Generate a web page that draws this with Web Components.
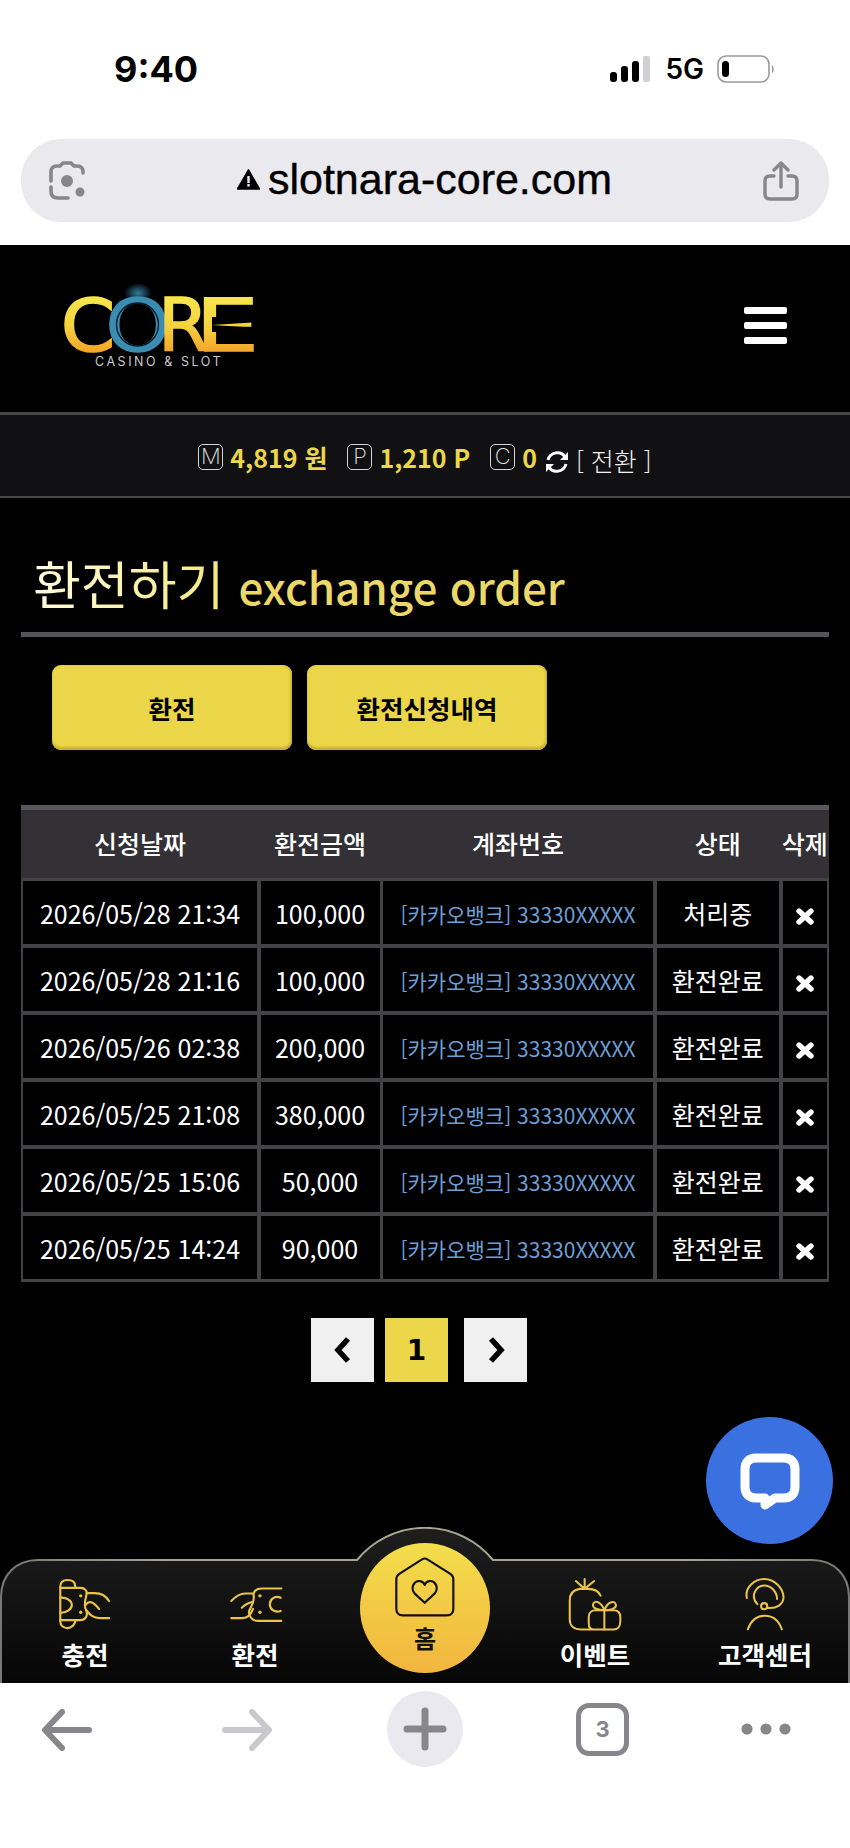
<!DOCTYPE html>
<html lang="ko">
<head>
<meta charset="utf-8">
<title>slotnara-core.com</title>
<style>
  html, body { margin: 0; padding: 0; background: #000; }
  body {
    position: relative;
    width: 850px;
    height: 1848px;
    overflow: hidden;
    display: flex;
    flex-direction: column;
    font-family: "Noto Sans CJK KR", "Noto Sans", sans-serif;
  }
  page-main { flex: 1 0 0; }
</style>
</head>
<body>
  <phone-chrome></phone-chrome>
  <site-header></site-header>
  <balance-bar></balance-bar>
  <page-main>
    <page-title></page-title>
    <tab-row>
      <tab-button>환전</tab-button>
      <tab-button>환전신청내역</tab-button>
    </tab-row>
    <order-table>
      <order-row date="2026/05/28 21:34" amount="100,000" status="처리중"></order-row>
      <order-row date="2026/05/28 21:16" amount="100,000" status="환전완료"></order-row>
      <order-row date="2026/05/26 02:38" amount="200,000" status="환전완료"></order-row>
      <order-row date="2026/05/25 21:08" amount="380,000" status="환전완료"></order-row>
      <order-row date="2026/05/25 15:06" amount="50,000" status="환전완료"></order-row>
      <order-row date="2026/05/25 14:24" amount="90,000" status="환전완료"></order-row>
    </order-table>
    <page-nav></page-nav>
  </page-main>
  <bottom-nav></bottom-nav>
  <browser-toolbar></browser-toolbar>
  <chat-fab></chat-fab>

<script>
/* small helper: every element below is just a static shadow root */
function define(tag, html) {
  class El extends HTMLElement {
    constructor() {
      super();
      this.attachShadow({ mode: 'open' });
    }
    connectedCallback() {
      this.shadowRoot.innerHTML = typeof html === 'function' ? html(this) : html;
    }
  }
  customElements.define(tag, El);
}

const KR = '"Noto Sans CJK KR", "Noto Sans", sans-serif';

/* iOS status bar + Safari-ish address bar */
define('phone-chrome', `
<style>
  :host { display: block; height: 245px; background: #fff; font-family: Inter, "Liberation Sans", sans-serif; color: #000; }
  .status { height: 139px; display: flex; align-items: flex-start; padding: 0 75px 0 114px; box-sizing: border-box; }
  .time { font-size: 36px; font-weight: 700; line-height: 44px; margin-top: 47px; }
  .right { margin-left: auto; display: flex; align-items: center; margin-top: 54px; height: 30px; }
  .g5 { font-size: 28px; font-weight: 600; margin: 0 13px 0 14px; line-height: 30px; }
  .url { margin: 0 21px; height: 83px; border-radius: 40px; background: #e9e9ee; display: flex; align-items: center; padding: 0 30px 0 27px; }
  .addr { flex: 1; display: flex; justify-content: center; align-items: center; gap: 8px; font-family: "Liberation Sans", sans-serif; font-size: 43px; line-height: 50px; padding-bottom: 3px; -webkit-text-stroke: .4px #000; }
  svg { display: block; flex: none; }
</style>
<div class="status">
  <div class="time">9:40</div>
  <div class="right">
    <svg width="41" height="26" viewBox="0 0 41 26">
      <rect x="0" y="16" width="7" height="10" rx="3" fill="#000"/>
      <rect x="11" y="10" width="7" height="16" rx="3" fill="#000"/>
      <rect x="22" y="5" width="7" height="21" rx="3" fill="#000"/>
      <rect x="33" y="0" width="7" height="26" rx="2" fill="#d0d0d2"/>
    </svg>
    <div class="g5">5G</div>
    <svg width="58" height="28" viewBox="0 0 58 28">
      <rect x="1" y="1" width="51" height="26" rx="8" fill="none" stroke="#9a9a9c" stroke-width="1.6"/>
      <rect x="5" y="6" width="7" height="16" rx="3.5" fill="#000"/>
      <path d="M55 10 C57 11 57.5 17 55 18 Z" fill="#9a9a9c"/>
    </svg>
  </div>
</div>
<div class="url">
  <svg width="38" height="40" viewBox="0 0 38 40" fill="none" stroke="#87878b" stroke-width="3.6" stroke-linecap="round">
    <path d="M3 20 V11 C3 7 5 5 9 5 H12 L15 2 H23 L26 5 H29 C33 5 35 7 35 11 V12"/>
    <path d="M3 26 V30 C3 35 6 37 10 37 H20"/>
    <circle cx="19" cy="20" r="6" fill="#87878b" stroke="none"/>
    <circle cx="32" cy="31" r="4.5" fill="#87878b" stroke="none"/>
  </svg>
  <div class="addr">
    <svg width="23" height="21" viewBox="0 0 23 21"><path d="M11.5 1 L22.5 20 H.5 Z" fill="#000" stroke="#000" stroke-width="1.5" stroke-linejoin="round"/><rect x="10.3" y="7" width="2.4" height="7" fill="#e9e9ee"/><rect x="10.3" y="15" width="2.4" height="2.6" fill="#e9e9ee"/></svg>
    <span>slotnara-core.com</span>
  </div>
  <svg width="36" height="40" viewBox="0 0 36 40" fill="none" stroke="#87878b" stroke-width="3.4" stroke-linecap="round" stroke-linejoin="round">
    <path d="M11 15 H7 C3 15 2 17 2 20 V33 C2 37 4 38 7 38 H29 C32 38 34 37 34 33 V20 C34 17 33 15 29 15 H25"/>
    <path d="M18 26 V3 M11 9 L18 2 L25 9"/>
  </svg>
</div>`);

/* logo letters are real text, each one stretched to the logo's wide proportions */
define('site-header', `
<style>
  :host { display: block; height: 167px; background: #000; }
  .wrap { display: flex; align-items: flex-start; padding: 20px 63px 0 60px; }
  .burger { margin-left: auto; margin-top: 42px; display: flex; flex-direction: column; gap: 8px; }
  .burger i { display: block; width: 43px; height: 7px; border-radius: 2px; background: #fff; }
  svg { display: block; overflow: visible; }
  text.big { font-family: "DejaVu Sans", sans-serif; font-size: 73px; stroke-width: 1.6; }
</style>
<div class="wrap">
  <svg width="200" height="110" viewBox="0 -20 200 110">
    <defs>
      <linearGradient id="gold2" gradientUnits="userSpaceOnUse" x1="0" y1="-55" x2="0" y2="0">
        <stop offset="0" stop-color="#f7e64d"/><stop offset=".55" stop-color="#f5d23f"/><stop offset="1" stop-color="#f4a62a"/>
      </linearGradient>
      <radialGradient id="flare"><stop offset="0" stop-color="#3f9cc4" stop-opacity=".8"/><stop offset="1" stop-color="#3f9cc4" stop-opacity="0"/></radialGradient>
    </defs>
    <ellipse cx="78" cy="8" rx="14" ry="10" fill="url(#flare)"/>
    <text class="big" transform="translate(.7 66) scale(1.07 1)" fill="url(#gold2)" stroke="url(#gold2)">C</text>
    <text class="big" transform="translate(45.5 66) scale(1.12 1)" fill="#3b8cb2" stroke="#3b8cb2">O</text>
    <text class="big" transform="translate(98 66) scale(1 1)" fill="url(#gold2)" stroke="url(#gold2)">R</text>
    <text class="big" transform="translate(135 66) scale(1.39 1)" fill="url(#gold2)" stroke="url(#gold2)">E</text>
    <polygon points="152,32 192,32 192,37.5 152,40" fill="#000"/>
    <polygon points="152,40 192,42.5 192,47 152,47" fill="#000"/>
    <ellipse cx="77.5" cy="39.5" rx="21" ry="21.5" fill="none" stroke="#04161f" stroke-width="1.3"/>
    <text x="35" y="81" font-family="Inter, sans-serif" font-size="12.5" letter-spacing="2.55" fill="#c9c9c9">CASINO &amp; SLOT</text>
  </svg>
  <div class="burger"><i></i><i></i><i></i></div>
</div>`);

define('balance-bar', `
<style>
  :host { display: block; height: 86px; box-sizing: border-box; background: #111113; border-top: 3px solid #48484a; border-bottom: 2px solid #48484a; font-family: ${KR}; }
  .row { height: 100%; display: flex; align-items: center; justify-content: center; padding-top: 2px; box-sizing: border-box; }
  .tag { width: 25px; height: 26px; box-sizing: border-box; border: 1.5px solid #d6d6d6; border-radius: 5px; color: #e0e0e0; font: 200 22px/23px Inter, sans-serif; text-align: center; margin-right: 7px; }
  .v { color: #ecd64a; font-size: 25px; font-weight: 700; line-height: 30px; margin-right: 20px; }
  .v.last { margin-right: 8px; }
  .sw { color: #f2f2f2; font-size: 25px; font-weight: 300; line-height: 30px; margin: 6px 0 0 7px; }
  svg { flex: none; margin-top: 10px; }
</style>
<div class="row">
  <span class="tag">M</span><span class="v">4,819 원</span>
  <span class="tag">P</span><span class="v">1,210 P</span>
  <span class="tag">C</span><span class="v last">0</span>
  <svg width="24" height="24" viewBox="0 0 24 24" fill="none" stroke="#fff" stroke-width="3">
    <path d="M3 10 C5 2 16 0 20 7"/><path d="M21 14 C19 22 8 24 4 17"/>
    <path d="M23 2 V10 H15 Z" fill="#fff" stroke="none"/><path d="M1 22 V14 H9 Z" fill="#fff" stroke="none"/>
  </svg>
  <span class="sw">[ 전환 ]</span>
</div>`);

define('page-title', `
<style>
  :host { display: block; margin: 0 21px; height: 139px; box-sizing: border-box; border-bottom: 5px solid #545458; font-family: ${KR}; white-space: nowrap; padding: 50px 0 0 12px; }
  .ko { font-size: 52px; line-height: 70px; font-weight: 400; background: linear-gradient(90deg, #fffbe0, #f5e87c); -webkit-background-clip: text; background-clip: text; color: transparent; }
  .en { font-size: 44px; line-height: 70px; font-weight: 500; color: #ecd868; margin-left: 14px; }
</style>
<span class="ko">환전하기</span><span class="en">exchange order</span>`);

define('tab-row', `
<style>
  :host { display: flex; gap: 15px; padding: 28px 0 0 52px; height: 168px; box-sizing: border-box; }
</style>
<slot></slot>`);

define('tab-button', `
<style>
  :host {
    display: flex; align-items: center; justify-content: center;
    width: 240px; height: 85px; border-radius: 9px; box-sizing: border-box;
    background: #ebd64a; box-shadow: inset 0 -3px 2px #c9b233, inset -2px 0 2px #d3bc38;
    color: #000; font-family: ${KR}; font-size: 25.5px; font-weight: 700;
  }
</style>
<slot></slot>`);

const COLS = 'grid-template-columns: 234px 119px 270px 122.5px 44.5px; column-gap: 3.5px;';

define('order-table', `
<style>
  :host { display: block; margin: 0 21px; font-family: ${KR}; }
  .head { display: grid; ${COLS} height: 73px; box-sizing: border-box; padding: 0 3px 0 2px; background: #333135; border-top: 5px solid #58585c; color: #fff; font-size: 25px; font-weight: 500; }
  .head div { display: flex; align-items: center; justify-content: center; white-space: nowrap; padding-bottom: 2px; }
  .body { display: flex; flex-direction: column; gap: 4px; padding: 3px 0; background: #434345; }
</style>
<div class="head"><div>신청날짜</div><div>환전금액</div><div>계좌번호</div><div>상태</div><div>삭제</div></div>
<div class="body"><slot></slot></div>`);

define('order-row', el => `
<style>
  :host { display: grid; ${COLS} height: 63px; padding: 0 3px 0 2px; font-family: ${KR}; color: #fff; font-size: 25px; }
  div { background: #000; display: flex; align-items: center; justify-content: center; white-space: nowrap; padding-top: 1px; box-sizing: border-box; }
  .acct { color: #6c9fd6; font-size: 21px; padding-top: 2px; }
  .x { padding: 8px 0 0; }
</style>
<div>${el.getAttribute('date')}</div>
<div>${el.getAttribute('amount')}</div>
<div class="acct">[카카오뱅크] 33330XXXXX</div>
<div>${el.getAttribute('status')}</div>
<div class="x"><svg width="18" height="17" viewBox="0 0 18 17"><path d="M3 3 L15 14 M15 3 L3 14" stroke="#fff" stroke-width="5.4" stroke-linecap="round"/></svg></div>`);

define('page-nav', `
<style>
  :host { display: flex; padding: 36px 0 0 311px; font-family: "DejaVu Sans", sans-serif; }
  div { width: 63px; height: 64px; display: flex; align-items: center; justify-content: center; background: #f0f0f0; color: #000; font-size: 28px; font-weight: 700; }
  .cur { background: #ecd64a; margin: 0 16px 0 11px; }
  svg { display: block; }
</style>
<div><svg width="18" height="28" viewBox="0 0 18 28"><path d="M14 3 L4 14 L14 25" fill="none" stroke="#000" stroke-width="5.5"/></svg></div>
<div class="cur">1</div>
<div><svg width="18" height="28" viewBox="0 0 18 28"><path d="M4 3 L14 14 L4 25" fill="none" stroke="#000" stroke-width="5.5"/></svg></div>`);

/* nav bar background has a hump for the home button, so it is one svg behind the flex row */
define('bottom-nav', `
<style>
  :host { display: block; position: relative; height: 124px; font-family: ${KR}; }
  .bg { position: absolute; left: 0; bottom: 0; display: block; }
  .row { position: relative; display: flex; height: 100%; }
  .item { flex: 1 0 0; display: flex; flex-direction: column; align-items: center; padding-top: 18px; box-sizing: border-box; color: #fff; font-size: 25.5px; font-weight: 700; }
  .item svg { display: block; height: 56px; }
  .item span { line-height: 34px; margin-top: 4px; white-space: nowrap; }
  .home { position: absolute; left: 360px; top: -16px; width: 130px; height: 130px; border-radius: 50%; background: linear-gradient(180deg, #f3de4b, #f2b53e); color: #111; font-size: 24px; font-weight: 700; display: flex; flex-direction: column; align-items: center; padding-top: 13px; box-sizing: border-box; }
  .home svg { display: block; }
  .home span { line-height: 32px; margin-top: 4px; }
</style>
<svg class="bg" width="850" height="156" viewBox="0 0 850 156">
  <defs>
    <linearGradient id="navfill" x1="0" y1="0" x2="0" y2="1"><stop offset="0" stop-color="#1e1e1e"/><stop offset="1" stop-color="#060606"/></linearGradient>
    <linearGradient id="navline" x1="0" y1="0" x2="1" y2="0"><stop offset="0" stop-color="#777"/><stop offset=".2" stop-color="#a8a590"/><stop offset=".8" stop-color="#a8a590"/><stop offset="1" stop-color="#777"/></linearGradient>
  </defs>
  <path d="M1 156 V70 C1 48 16 33 38 33 H357 A88 88 0 0 1 493 33 H812 C834 33 849 48 849 70 V156" fill="url(#navfill)" stroke="url(#navline)" stroke-width="2"/>
</svg>
<div class="row">
  <div class="item">
    <svg viewBox="20 15 170 170" fill="none" stroke="#eac34a" stroke-width="6.5" stroke-linecap="round" stroke-linejoin="round">
      <path d="M75 48 V42 C75 30 65 24 52 24 C38 24 30 32 30 44 V150 C30 162 40 170 52 170 C64 170 74 160 76 147"/>
      <path d="M30 48 H92 C105 48 112 58 110 66 C106 84 100 102 108 115 C116 132 106 146 90 146 H30"/>
      <path d="M30 78 C50 76 65 88 65 100 C65 112 50 124 30 124"/>
      <circle cx="92" cy="72" r="5" fill="#eac34a" stroke="none"/><circle cx="92" cy="122" r="5" fill="#eac34a" stroke="none"/>
      <path d="M110 64 H135 C150 64 168 72 178 88"/>
      <path d="M107 100 C115 88 125 85 148 112"/>
      <path d="M109 116 C120 130 130 140 150 140 H178"/>
    </svg>
    <span>충전</span>
  </div>
  <div class="item">
    <svg viewBox="525 15 170 170" fill="none" stroke="#eac34a" stroke-width="6.5" stroke-linecap="round" stroke-linejoin="round">
      <path d="M538 88 C550 75 562 65 580 65 H606"/>
      <path d="M690 50 H630 C612 50 604 60 606 72 C609 88 600 102 592 118 C590 132 600 148 618 148 H690"/>
      <path d="M570 108 C582 96 595 92 604 90"/>
      <path d="M538 140 H572 C588 140 598 128 604 112"/>
      <circle cx="625" cy="72" r="5" fill="#eac34a" stroke="none"/><circle cx="625" cy="122" r="5" fill="#eac34a" stroke="none"/>
      <path d="M688 78 C668 70 655 84 655 98 C655 112 668 125 688 118"/>
    </svg>
    <span>환전</span>
  </div>
  <div class="item"></div>
  <div class="item">
    <svg viewBox="545 90 170 165" fill="none" stroke="#eac34a" stroke-width="6" stroke-linecap="round" stroke-linejoin="round">
      <path d="M600 96 V125 M574 102 L600 125 M628 102 L600 125"/>
      <path d="M647 145 C640 130 625 125 610 125 H585 C565 128 556 140 556 160 V215 C556 235 570 245 590 245 H685 C698 245 705 235 705 222 V208 C705 195 698 188 685 188 H632 C620 188 612 196 612 208 V226 C612 238 618 245 628 245"/>
      <path d="M658 188 V245"/>
      <path d="M658 188 C640 188 622 182 625 170 C630 155 650 165 658 188 C666 165 688 155 692 172 C694 182 676 188 658 188"/>
    </svg>
    <span>이벤트</span>
  </div>
  <div class="item">
    <svg viewBox="1055 90 170 165" fill="none" stroke="#eac34a" stroke-width="6" stroke-linecap="round" stroke-linejoin="round">
      <path d="M1087 152 C1080 120 1110 96 1138 96 C1170 96 1195 125 1195 150 C1195 170 1175 184 1148 181"/>
      <path d="M1118 170 C1095 145 1115 115 1138 115 C1160 115 1176 135 1176 155"/>
      <circle cx="1138" cy="176" r="9"/>
      <path d="M1090 244 C1100 215 1120 204 1140 204 C1160 204 1180 215 1190 244"/>
    </svg>
    <span>고객센터</span>
  </div>
</div>
<div class="home">
  <svg width="60" height="62" viewBox="28 28 182 180" fill="none" stroke="#111" stroke-width="6.5" stroke-linejoin="round">
    <path d="M110 34 Q118 29 126 34 L196 78 Q205 84 205 95 V184 Q205 204 185 204 H52 Q32 204 32 184 V95 Q32 84 41 78 Z"/>
    <path d="M118 166 L88 138 C72 118 88 98 104 100 C112 101 116 106 118 112 C120 106 124 101 132 100 C148 98 164 118 148 138 Z"/>
  </svg>
  <span>홈</span>
</div>`);

define('browser-toolbar', `
<style>
  :host { display: block; position: relative; height: 165px; background: #fff; font-family: Inter, sans-serif; }
  .row { display: flex; align-items: flex-start; padding: 8px 0 0 42px; }
  svg { display: block; flex: none; }
  .plus { width: 76px; height: 76px; margin-left: 115px; border-radius: 50%; background: #e9e9ef; display: flex; align-items: center; justify-content: center; }
  .tabs { width: 53px; height: 53px; margin: 12px 0 0 113px; box-sizing: border-box; border: 5px solid #87878b; border-radius: 13px; color: #87878b; font-size: 22px; font-weight: 700; line-height: 42px; text-align: center; }
</style>
<div class="row">
  <svg style="margin-top:18px" width="50" height="42" viewBox="0 0 50 42" fill="none" stroke="#87878b" stroke-width="6" stroke-linecap="round" stroke-linejoin="round"><path d="M47 21 H4 M20 3 L3 21 L20 39"/></svg>
  <svg style="margin:18px 0 0 130px" width="50" height="42" viewBox="0 0 50 42" fill="none" stroke="#c9c9cd" stroke-width="6" stroke-linecap="round" stroke-linejoin="round"><path d="M3 21 H46 M30 3 L47 21 L30 39"/></svg>
  <div class="plus"><svg width="44" height="44" viewBox="0 0 44 44" stroke="#87878b" stroke-width="7" stroke-linecap="round"><path d="M22 4 V40 M4 22 H40"/></svg></div>
  <div class="tabs">3</div>
  <svg style="margin:32px 0 0 112px" width="50" height="12" viewBox="0 0 50 12" fill="#87878b"><circle cx="6" cy="6" r="5.6"/><circle cx="25" cy="6" r="5.6"/><circle cx="44" cy="6" r="5.6"/></svg>
</div>`);

define('chat-fab', `
<style>
  :host { position: absolute; left: 706px; top: 1417px; width: 127px; height: 127px; border-radius: 50%; background: #3b70e0; display: block; }
  svg { position: absolute; left: 34px; top: 36px; display: block; }
</style>
<svg width="60" height="60" viewBox="0 0 60 60"><path d="M16 5 H44 C51 5 55 9 55 16 V34 C55 41 51 45 44 45 H35 L25 52 V45 H16 C9 45 5 41 5 34 V16 C5 9 9 5 16 5 Z" fill="none" stroke="#fff" stroke-width="9" stroke-linejoin="round"/></svg>`);
</script>
</body>
</html>
